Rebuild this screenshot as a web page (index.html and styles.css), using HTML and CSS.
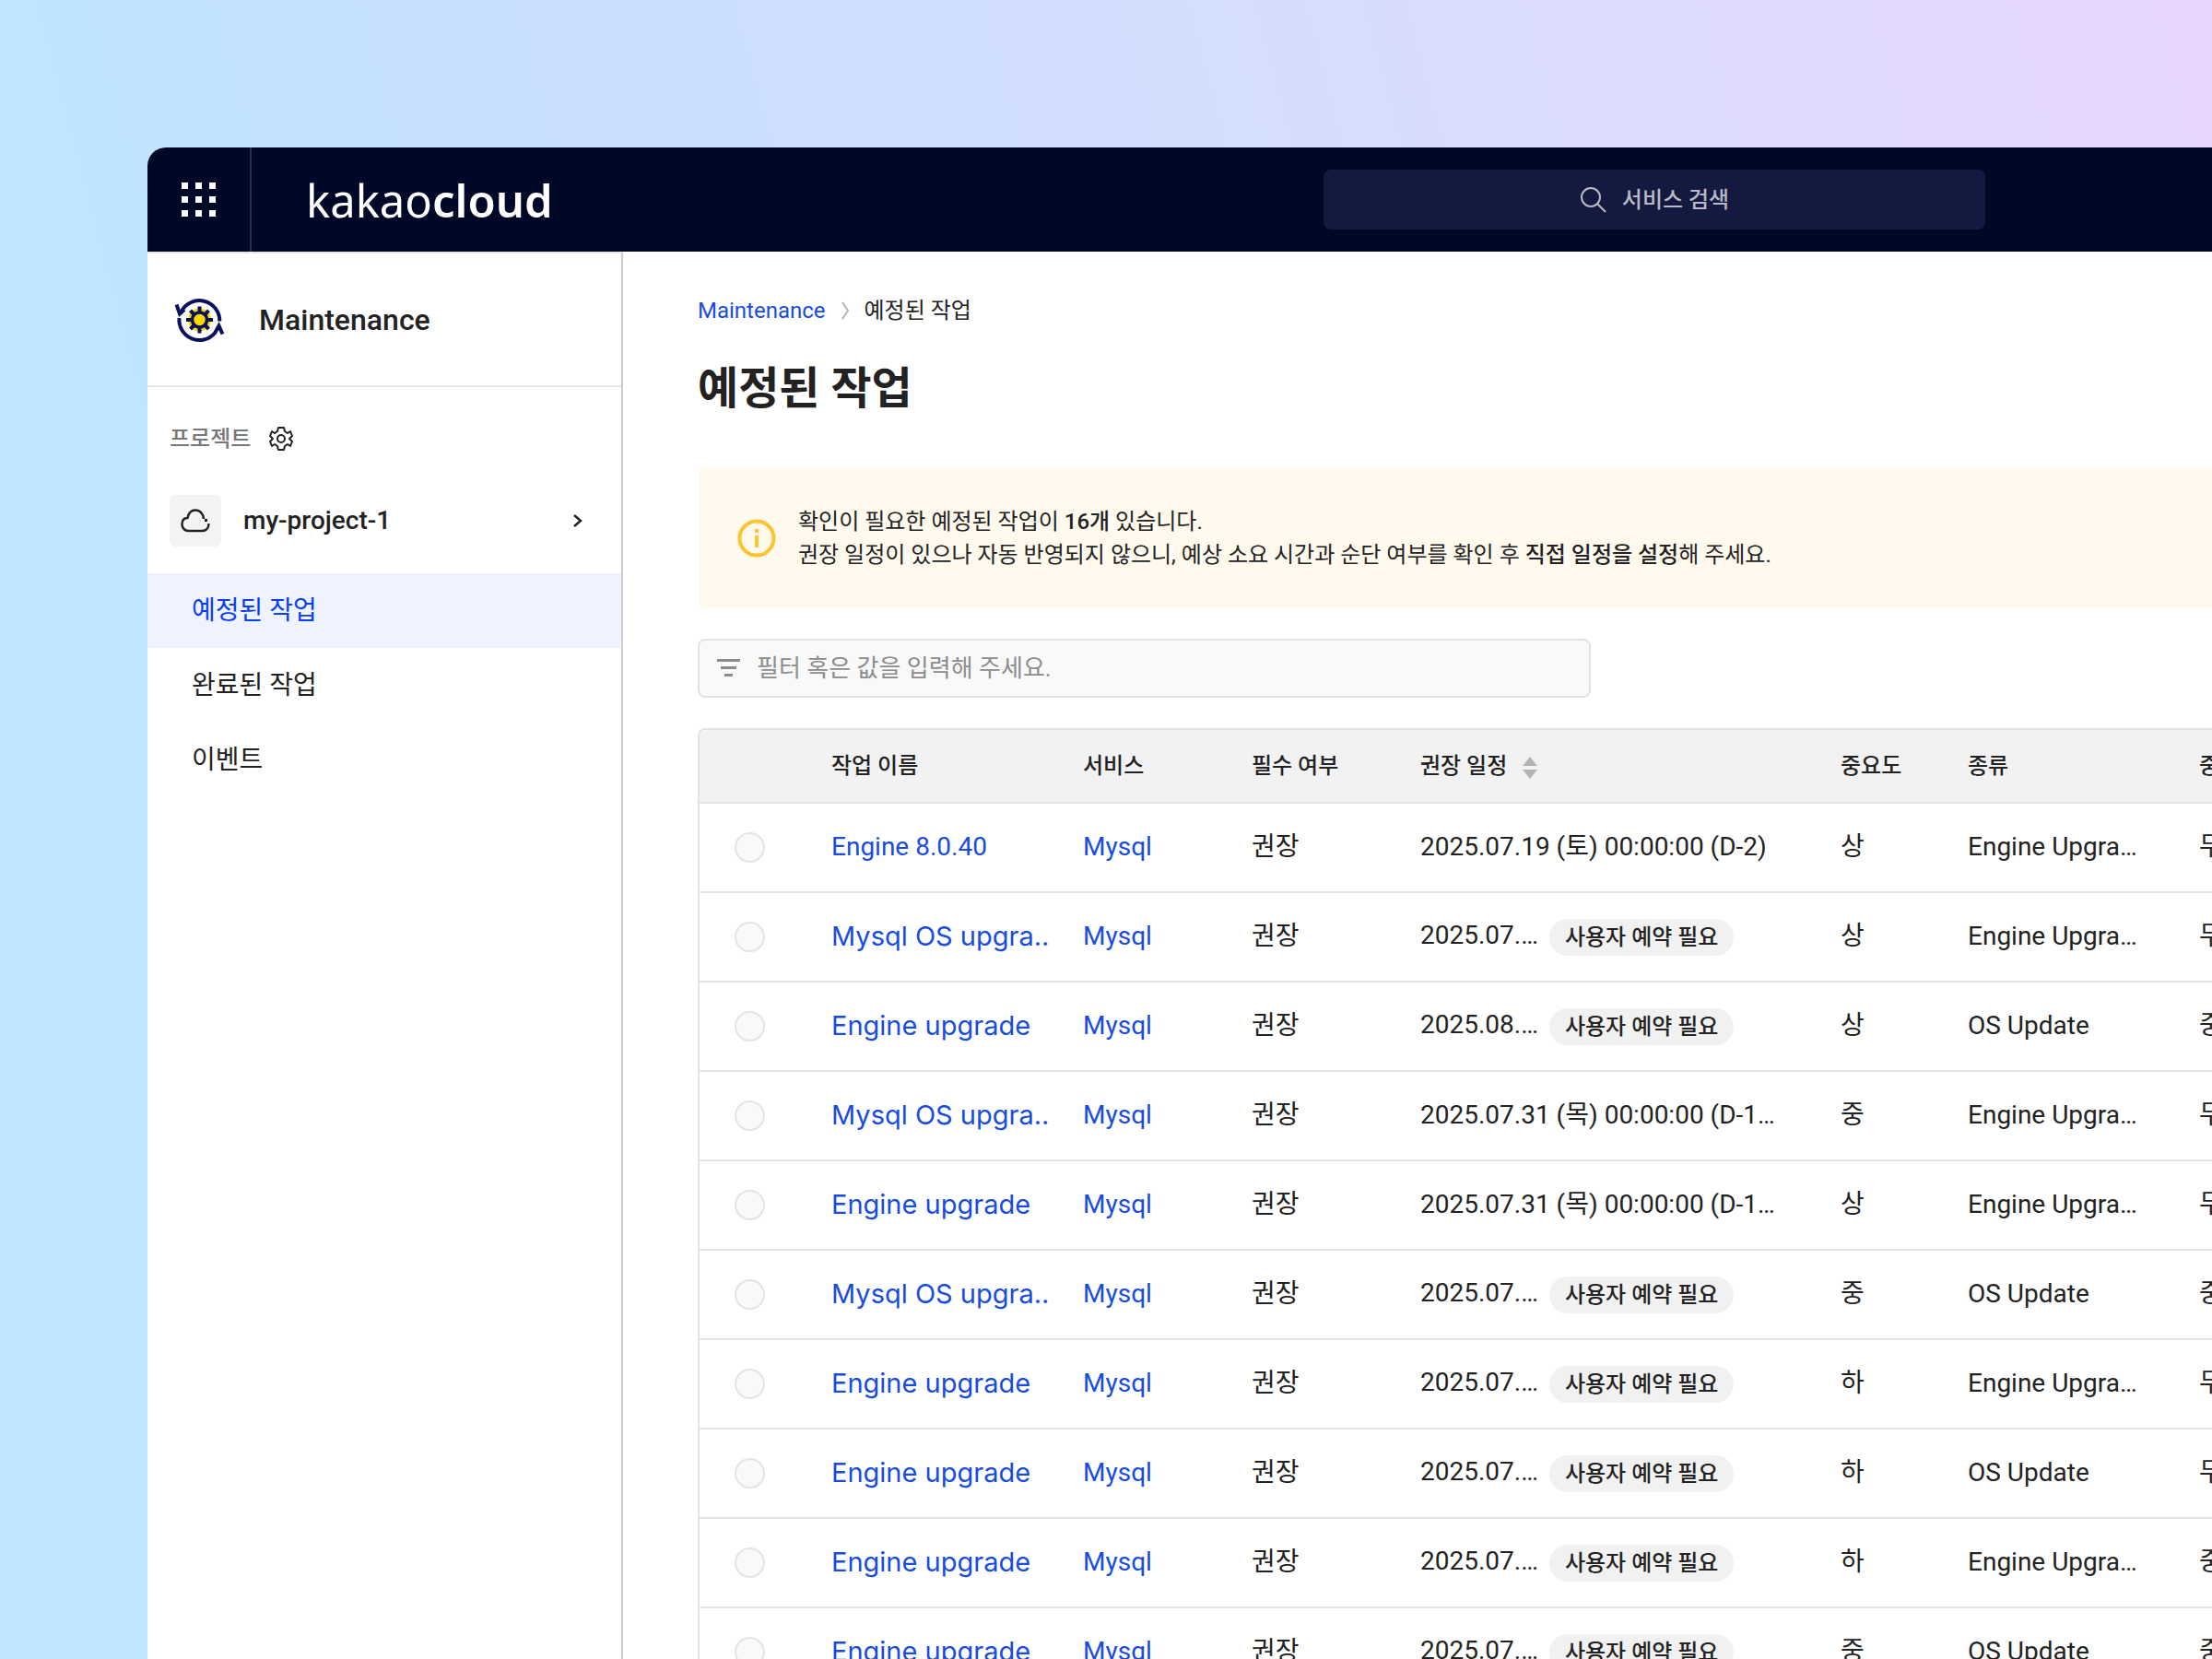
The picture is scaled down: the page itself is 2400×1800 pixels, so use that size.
FILE: index.html
```html
<!DOCTYPE html>
<html lang="ko">
<head>
<meta charset="utf-8">
<meta name="viewport" content="width=device-width, initial-scale=1">
<title>예정된 작업 - Maintenance</title>
<link rel="stylesheet" href="styles.css">
</head>
<body>
<div class="window">
  <header class="topbar">
    <button class="apps" type="button" aria-label="전체 서비스">
      <svg width="38" height="38" viewBox="0 0 38 38" fill="#fff" aria-hidden="true">
        <path d="M0 0h7v7H0zM15 0h7v7h-7zM30 0h7v7h-7zM0 15h7v7H0zM15 15h7v7h-7zM30 15h7v7h-7zM0 30h7v7H0zM15 30h7v7h-7zM30 30h7v7h-7z"/>
      </svg>
    </button>
    <a class="logo" href="#">kakao<strong>cloud</strong></a>
    <button class="search" type="button">
      <svg width="30" height="30" viewBox="0 0 30 30" fill="none" stroke="currentColor" stroke-width="2" aria-hidden="true">
        <circle cx="12" cy="12" r="10"/><path d="M19 19l9 9"/>
      </svg>
      서비스 검색
    </button>
  </header>
  <div class="body">
    <aside class="sidebar">
      <div class="product">
        <svg width="55" height="52" viewBox="0 0 55 52" fill="none" stroke="#06105c" stroke-width="4" aria-hidden="true">
          <circle cx="27.5" cy="26" r="12.5" fill="#ffd900" stroke="none"/>
          <path d="M27.5 11.500v29M13 26h29M17.5 16l20 20M37.5 16l-20 20"/>
          <circle cx="27.5" cy="26" r="8" fill="#ffd900" stroke-width="3.5"/>
          <path d="M2.5 9.500l3.500 10 5-4.500"/>
          <path d="M7.5 17.500A22 22 0 0 1 49.300 27.500"/>
          <path d="M5.500 24A22 22 0 0 0 44 40.500l4.500-8 4 9"/>
        </svg>
        <span>Maintenance</span>
      </div>
      <div class="project-label">
        <span>프로젝트</span>
        <button class="icon-button" type="button" aria-label="프로젝트 설정">
          <svg width="26" height="26" viewBox="0 0 26 26" fill="none" stroke="#222" stroke-width="2" stroke-linejoin="round" aria-hidden="true">
            <path d="M10 1h6l1 4 3 2 3-2 2 5-3 3 3 3-2 5-3-2-3 2-1 4h-6l-1-4-3-2-3 2-2-5 3-3-3-3 2-5 3 2 3-2z"/><circle cx="13" cy="13" r="4"/>
          </svg>
        </button>
      </div>
      <button class="project" type="button">
        <span class="project-icon">
          <svg width="32" height="26" viewBox="0 0 32 26" fill="none" stroke="#222" stroke-width="2.5" aria-hidden="true">
            <path d="M30.500 16c0 5-3 8-7 8H8.500c-4 0-7-3-7-7s2-7 6-7c1-5 4-8.500 8.500-8.500 5 0 8.500 4 9 9.500"/><path d="M26 12.500h3" stroke-width="3"/>
          </svg>
        </span>
        <span class="project-name">my-project-1</span>
        <svg width="10" height="16" viewBox="0 0 10 16" fill="none" stroke="#222" stroke-width="2.5" aria-hidden="true"><path d="M1 2l7 6-7 6"/></svg>
      </button>
      <nav class="menu">
        <a class="active" href="#">예정된 작업</a>
        <a href="#">완료된 작업</a>
        <a href="#">이벤트</a>
      </nav>
    </aside>
    <main class="content">
      <nav class="crumbs">
        <a href="#">Maintenance</a>
        <svg width="10" height="20" viewBox="0 0 10 20" fill="none" stroke="#b5b5b5" stroke-width="2" aria-hidden="true"><path d="M2 1l6 9-6 9"/></svg>
        <span>예정된 작업</span>
      </nav>
      <h1>예정된 작업</h1>
      <section class="notice">
        <svg width="42" height="42" viewBox="0 0 42 42" fill="none" stroke="#ffc32b" stroke-width="4" aria-hidden="true">
          <circle cx="21" cy="21" r="18.5"/><path d="M21 11v4M21 18v13"/>
        </svg>
        <p>확인이 필요한 예정된 작업이 <strong>16개</strong> 있습니다.<br>권장 일정이 있으나 자동 반영되지 않으니, 예상 소요 시간과 순단 여부를 확인 후 <strong>직접 일정을 설정</strong>해 주세요.</p>
      </section>
      <label class="filter">
        <svg width="25" height="20" viewBox="0 0 25 20" fill="#8c8c8c" aria-hidden="true"><path d="M0 0h25v3H0zM4 8h17v3H4zM8 16h9v3H8z"/></svg>
        <input type="text" aria-label="필터" placeholder="필터 혹은 값을 입력해 주세요.">
      </label>
      <div class="table-wrap">
        <table>
          <colgroup><col class="c-pick"><col class="c-name"><col class="c-short"><col class="c-short"><col class="c-date"><col class="c-level"><col class="c-kind"><col class="c-short"></colgroup>
          <thead>
            <tr><th></th><th>작업 이름</th><th>서비스</th><th>필수 여부</th><th>권장 일정<svg class="sort" width="16" height="24" viewBox="0 0 16 24" fill="#b3b3b3" aria-hidden="true"><path d="M8 0l8 10H0zM0 14h16L8 24z"/></svg></th><th>중요도</th><th>종류</th><th>중단 여부</th></tr>
          </thead>
          <tbody>
            <tr><td><input type="radio" name="job" aria-label="1"></td><td><a href="#">Engine 8.0.40</a></td><td><a href="#">Mysql</a></td><td>권장</td><td>2025.07.19 (토) 00:00:00 (D-2)</td><td>상</td><td>Engine Upgra…</td><td>무중단</td></tr>
            <tr><td><input type="radio" name="job" aria-label="2"></td><td><a class="job" href="#">Mysql OS upgra..</a></td><td><a href="#">Mysql</a></td><td>권장</td><td>2025.07.…<span class="badge">사용자 예약 필요</span></td><td>상</td><td>Engine Upgra…</td><td>무중단</td></tr>
            <tr><td><input type="radio" name="job" aria-label="3"></td><td><a class="job" href="#">Engine upgrade</a></td><td><a href="#">Mysql</a></td><td>권장</td><td>2025.08.…<span class="badge">사용자 예약 필요</span></td><td>상</td><td>OS Update</td><td>중단</td></tr>
            <tr><td><input type="radio" name="job" aria-label="4"></td><td><a class="job" href="#">Mysql OS upgra..</a></td><td><a href="#">Mysql</a></td><td>권장</td><td>2025.07.31 (목) 00:00:00 (D-1…</td><td>중</td><td>Engine Upgra…</td><td>무중단</td></tr>
            <tr><td><input type="radio" name="job" aria-label="5"></td><td><a class="job" href="#">Engine upgrade</a></td><td><a href="#">Mysql</a></td><td>권장</td><td>2025.07.31 (목) 00:00:00 (D-1…</td><td>상</td><td>Engine Upgra…</td><td>무중단</td></tr>
            <tr><td><input type="radio" name="job" aria-label="6"></td><td><a class="job" href="#">Mysql OS upgra..</a></td><td><a href="#">Mysql</a></td><td>권장</td><td>2025.07.…<span class="badge">사용자 예약 필요</span></td><td>중</td><td>OS Update</td><td>중단</td></tr>
            <tr><td><input type="radio" name="job" aria-label="7"></td><td><a class="job" href="#">Engine upgrade</a></td><td><a href="#">Mysql</a></td><td>권장</td><td>2025.07.…<span class="badge">사용자 예약 필요</span></td><td>하</td><td>Engine Upgra…</td><td>무중단</td></tr>
            <tr><td><input type="radio" name="job" aria-label="8"></td><td><a class="job" href="#">Engine upgrade</a></td><td><a href="#">Mysql</a></td><td>권장</td><td>2025.07.…<span class="badge">사용자 예약 필요</span></td><td>하</td><td>OS Update</td><td>무중단</td></tr>
            <tr><td><input type="radio" name="job" aria-label="9"></td><td><a class="job" href="#">Engine upgrade</a></td><td><a href="#">Mysql</a></td><td>권장</td><td>2025.07.…<span class="badge">사용자 예약 필요</span></td><td>하</td><td>Engine Upgra…</td><td>중단</td></tr>
            <tr><td><input type="radio" name="job" aria-label="10"></td><td><a class="job" href="#">Engine upgrade</a></td><td><a href="#">Mysql</a></td><td>권장</td><td>2025.07.…<span class="badge">사용자 예약 필요</span></td><td>중</td><td>OS Update</td><td>중단</td></tr>
          </tbody>
        </table>
      </div>
    </main>
  </div>
</div>
</body>
</html>
```
FILE: styles.css
```css
* { box-sizing: border-box; }

body {
  margin: 0;
  height: 100vh;
  overflow: hidden;
  padding: 160px 0 0 160px;
  background: linear-gradient(75deg, #bfe5ff 18%, #cadfff 37%, #d5deff 64%, #e8d5ff 100%);
  color: #222;
  font-family: Roboto, "Noto Sans CJK KR", sans-serif;
  font-size: 28px;
  line-height: 40px;
}

a { color: #184ce0; text-decoration: none; }
button { border: 0; padding: 0; background: none; font: inherit; color: inherit; }

.window {
  display: flex;
  flex-direction: column;
  height: 100%;
  border-top-left-radius: 20px;
  overflow: hidden;
  background: #fff;
}

.topbar {
  display: flex;
  align-items: center;
  flex: none;
  height: 113px;
  background: #000828;
}
.apps {
  display: grid;
  place-items: center;
  width: 113px;
  height: 100%;
  border-right: 2px solid #262c48;
}
.logo {
  margin-left: 59px;
  font-family: "Noto Sans", sans-serif;
  font-size: 49px;
  font-weight: 400;
  line-height: 64px;
  color: #fff;
}
.logo strong { font-weight: 600; }
.search {
  display: flex;
  align-items: center;
  justify-content: center;
  gap: 16px;
  width: 718px;
  height: 65px;
  margin: 0 246px 0 auto;
  border-radius: 8px;
  background: #14193f;
  color: #b9bac6;
  font-size: 24px;
  font-weight: 500;
}

.body { display: flex; flex: 1; min-height: 0; }

.sidebar {
  flex: none;
  width: 516px;
  border-top: 2px solid #e6e6e6;
  border-right: 2px solid #ccc;
}
.product {
  display: flex;
  align-items: center;
  gap: 37px;
  height: 145px;
  padding-left: 29px;
  border-bottom: 2px solid #e6e6e6;
  font-size: 32px;
  font-weight: 500;
}
.project-label {
  display: flex;
  align-items: center;
  gap: 20px;
  padding: 36px 24px 0;
  color: #777;
  font-size: 24px;
  font-weight: 500;
}
.icon-button { display: flex; }
.project {
  display: flex;
  align-items: center;
  width: 100%;
  margin: 41px 0 29px;
  padding: 0 42px 0 24px;
  font-weight: 500;
  text-align: left;
}
.project-icon {
  display: grid;
  place-items: center;
  width: 56px;
  height: 56px;
  border-radius: 6px;
  background: #f3f3f3;
}
.project-name { flex: 1; margin-left: 24px; }
.menu a {
  display: block;
  padding: 20px 48px;
  line-height: 41px;
  color: #222;
}
.menu .active { background: #eef3ff; color: #0b3df5; }

.content { flex: 1; min-width: 0; padding: 44px 0 0 81px; overflow: hidden; }

.crumbs { display: flex; align-items: center; gap: 16px; font-size: 24px; }

h1 { margin: 29px 0 49px; font-size: 48px; font-weight: 700; line-height: 72px; }

.notice {
  display: flex;
  align-items: center;
  gap: 24px;
  height: 153px;
  padding: 0 43px;
  border-radius: 8px 0 0 8px;
  background: #fffaed;
  font-size: 24px;
  line-height: 36px;
}
.notice p { margin: 0; }
.notice strong { font-weight: 500; }

.filter {
  display: flex;
  align-items: center;
  gap: 18px;
  width: 969px;
  height: 64px;
  margin: 33px 0;
  padding: 0 19px;
  border: 2px solid #e1e1e8;
  border-radius: 8px;
  background: #f9f9f9;
}
.filter input {
  flex: 1;
  border: 0;
  padding: 0;
  outline: 0;
  background: none;
  font: inherit;
  font-size: 26px;
}
.filter input::placeholder { color: #8c8c8c; }

.table-wrap {
  width: max-content;
  border: solid #e3e3e3;
  border-width: 2px 0 0 2px;
  border-radius: 8px 0 0 0;
  overflow: hidden;
}
table { table-layout: fixed; width: 1778px; border-collapse: separate; border-spacing: 0; }
.c-pick { width: 111px; }
.c-name { width: 273px; }
.c-short { width: 183px; }
.c-date { width: 456px; }
.c-level { width: 138px; }
.c-kind { width: 251px; }

th, td {
  padding: 0 0 0 32px;
  border-bottom: 2px solid #e3e3e3;
  text-align: left;
  white-space: nowrap;
}
th { height: 80px; background: #f2f2f2; font-size: 24px; font-weight: 500; }
td { height: 97px; padding-bottom: 1px; }
.sort { margin-left: 17px; vertical-align: middle; }

td input {
  appearance: none;
  display: block;
  width: 33px;
  height: 33px;
  margin: 0 0 0 6px;
  border: 2px solid #e3e3e8;
  border-radius: 50%;
  background: #f9f9f9;
}
.job { font-family: Inter, sans-serif; font-size: 29px; }
.badge {
  display: inline-block;
  margin-left: 12px;
  padding: 0 17px;
  border-radius: 20px;
  background: #f1f1f1;
  font-size: 24px;
  font-weight: 500;
  vertical-align: middle;
}
```
